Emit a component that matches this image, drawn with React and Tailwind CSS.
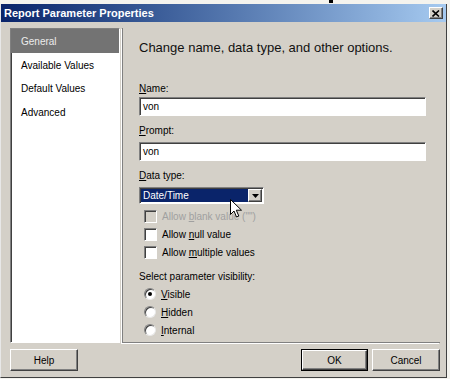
import React from "react";

const sunken = "border border-t-[#808080] border-l-[#808080] border-r-white border-b-white shadow-[inset_1px_1px_0_#404040]";
const raised = "border border-t-white border-l-white border-r-[#404040] border-b-[#404040] shadow-[inset_-1px_-1px_0_#808080]";

const Checkbox = ({ disabled, children }) => (
  <div className="flex items-center h-[18px] pl-[5px]">
    <div className={`w-[13px] h-[13px] ${sunken} ${disabled ? "bg-[#d4d0c8]" : "bg-white"}`} />
    <span className={`ml-[5px] ${disabled ? "text-[#a0a0a0]" : "text-black"}`}>{children}</span>
  </div>
);

const Radio = ({ checked, children }) => (
  <div className="flex items-center h-[18px] pl-[5px]">
    <div className="relative w-[12px] h-[12px] rounded-full bg-white border border-t-[#808080] border-l-[#808080] border-r-[#e8e8e8] border-b-[#e8e8e8] shadow-[inset_1px_1px_0_#404040]">
      {checked && <div className="absolute left-[3px] top-[3px] w-[4px] h-[4px] rounded-full bg-black" />}
    </div>
    <span className="ml-[5px] text-black">{children}</span>
  </div>
);

const Button = ({ children, isDefault, className = "" }) => (
  <div className={`${isDefault ? "border border-black" : ""} ${className}`}>
    <div className={`h-full w-full flex items-center justify-center bg-[#d4d0c8] ${raised}`}>{children}</div>
  </div>
);

export default function App() {
  return (
    <div className="relative w-[450px] h-[379px] bg-[#f4f3ee] overflow-hidden text-[10px] leading-[13px]" style={{ fontFamily: '"Liberation Sans", Arial, sans-serif' }}>
      {/* cropped glyph from above */}
      <div className="absolute left-[329px] top-0 w-[4px] h-[3px] bg-black" />

      <div className="mt-[4px] w-[447px] h-[374px] flex flex-col bg-[#d4d0c8] border-r border-b border-r-[#404040] border-b-[#404040] border-l border-l-[#e8e8e8]">
        {/* title bar */}
        <div className="flex items-center justify-between h-[18px] pl-[3px] pr-[3px] bg-gradient-to-r from-[#0a246a] to-[#a6caf0]">
          <span className="text-white font-bold text-[11px]">Report Parameter Properties</span>
          <div className={`w-[14px] h-[12px] flex items-center justify-center bg-[#d4d0c8] ${raised}`}>
            <svg width="8" height="7" viewBox="0 0 8 7">
              <path d="M0.5 0.5 L7 6.5 M7 0.5 L0.5 6.5" stroke="#000" strokeWidth="1.6" />
            </svg>
          </div>
        </div>

        {/* body */}
        <div className="flex flex-row pt-[6px] pl-[9px] pr-[6px]">
          {/* sidebar */}
          <div className={`w-[110px] h-[315px] bg-white ${sunken}`}>
            <div className="h-[24px] bg-[#737373] flex items-center pl-[10px] text-[#ececec]">General</div>
            <div className="h-[24px] flex items-center pl-[10px]">Available Values</div>
            <div className="h-[23px] flex items-center pl-[10px]">Default Values</div>
            <div className="h-[24px] flex items-center pl-[10px]">Advanced</div>
          </div>

          {/* content */}
          <div className="ml-[2px] flex-1 h-[315px] border-l border-b border-l-[#808080] border-b-[#808080] shadow-[-1px_1px_0_white] pl-[16px] pr-[14px] flex flex-col">
            <div className="mt-[12px] h-[16px] leading-[16px] text-[13px] text-[#111]">Change name, data type, and other options.</div>

            <div className="mt-[26px]"><u>N</u>ame:</div>
            <div className={`mt-[2px] h-[19px] bg-white flex items-center pl-[3px] ${sunken}`}>von</div>

            <div className="mt-[8px]"><u>P</u>rompt:</div>
            <div className={`mt-[5px] h-[19px] bg-white flex items-center pl-[3px] ${sunken}`}>von</div>

            <div className="mt-[8px]"><u>D</u>ata type:</div>
            <div className={`mt-[5px] w-[125px] h-[17px] bg-white flex items-stretch p-[1px] ${sunken}`}>
              <div className="flex-1 bg-[#0a246a] text-white flex items-center pl-[2px]">Date/Time</div>
              <div className={`w-[14px] flex items-center justify-center bg-[#d4d0c8] ${raised}`}>
                <svg width="7" height="4" viewBox="0 0 7 4"><path d="M0 0 H7 L3.5 4 Z" fill="#000" /></svg>
              </div>
            </div>

            <div className="mt-[3px]">
              <Checkbox disabled>Allow <u>b</u>lank value ("")</Checkbox>
              <Checkbox>Allow <u>n</u>ull value</Checkbox>
              <Checkbox>Allow <u>m</u>ultiple values</Checkbox>
            </div>

            <div className="mt-[9px]">Select parameter visibility:</div>
            <div className="mt-[2px]">
              <Radio checked><u>V</u>isible</Radio>
              <Radio><u>H</u>idden</Radio>
              <Radio><u>I</u>nternal</Radio>
            </div>
          </div>
        </div>

        {/* footer */}
        <div className="flex flex-row pl-[9px] pr-[6px] mt-[6px]">
          <Button className="w-[68px] h-[22px]">Help</Button>
          <div className="flex-1" />
          <Button isDefault className="w-[67px] h-[22px]">OK</Button>
          <Button className="ml-[4px] w-[68px] h-[22px]">Cancel</Button>
        </div>
      </div>

      {/* mouse cursor */}
      <svg className="absolute left-[230px] top-[199px]" width="13" height="19" viewBox="0 0 13 19">
        <path d="M0.5 0.5 L0.5 15.5 L4 12 L6.5 18 L8.8 17 L6.3 11.2 L11.5 11.2 Z" fill="#fff" stroke="#000" strokeWidth="1" strokeLinejoin="miter" />
      </svg>
    </div>
  );
}
